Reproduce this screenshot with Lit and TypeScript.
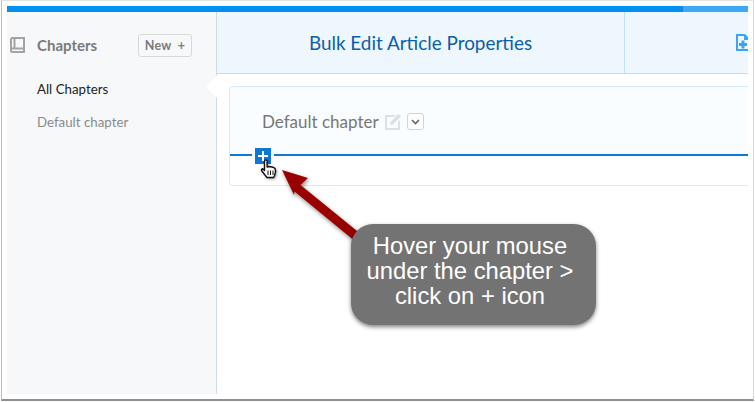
import { LitElement, html, css, svg } from "lit";
import { customElement } from "lit/decorators.js";

@customElement("app-root")
export class AppRoot extends LitElement {
  static styles = css`
    :host {
      display: block;
      width: 755px;
      height: 402px;
      overflow: hidden;
      background: #fff;
      font-family: "Lato", "Open Sans", sans-serif;
    }
    .shot {
      position: relative;
      box-sizing: border-box;
      width: 753px;
      height: 401px;
      margin-left: 1px;
      padding: 5px;
      background: #fff;
      border-left: 1px solid #bdbdbd;
      border-top: 1px solid #e4e4e4;
      border-bottom: 2px solid #8f8f8f;
      border-right: 1px solid #d8d8d8;
    }
    .page {
      width: 741px;
      height: 388px;
      display: flex;
      flex-direction: column;
      overflow: hidden;
    }
    .progress {
      flex: none;
      height: 6px;
      display: flex;
      background: #3fa7f7;
    }
    .progress__done {
      width: 675px;
      background: #0290f5;
      border-right: 1px solid #1a7fd0;
    }
    .body {
      flex: 1;
      display: flex;
      min-height: 0;
    }
    .side {
      position: relative;
      flex: none;
      width: 209px;
      background: #f7f8fa;
      border-right: 1px solid #cfdbe3;
    }
    .side__head {
      height: 23px;
      margin-top: 22px;
      padding: 0 24px 0 3px;
      display: flex;
      align-items: center;
      color: #7a7a7a;
    }
    .side__head svg {
      flex: none;
      width: 15px;
      height: 16px;
      margin: 0 12px 2px 0;
    }
    .side__title {
      flex: 1;
      margin-bottom: 1px;
      font-size: 15px;
      font-weight: 700;
    }
    .new {
      box-sizing: border-box;
      width: 54px;
      height: 23px;
      display: flex;
      align-items: center;
      justify-content: center;
      gap: 6px;
      border: 1px solid #d8d8d8;
      border-radius: 3px;
      font-size: 12.5px;
      font-weight: 700;
      letter-spacing: 0.3px;
    }
    .side__item {
      margin: 0 0 0 30px;
      font-size: 13.3px;
      line-height: 18px;
      color: #8a8a8a;
    }
    .side__item--on {
      margin-top: 23px;
      margin-bottom: 15px;
      color: #222;
    }
    .notch {
      position: absolute;
      right: -1px;
      top: 63px;
      width: 11px;
      height: 23px;
      background: #fff;
      clip-path: polygon(100% 0, 0 50%, 100% 100%);
    }
    .main {
      flex: 1;
      min-width: 0;
      display: flex;
      flex-direction: column;
    }
    .tabs {
      flex: none;
      height: 62px;
      display: flex;
      box-sizing: border-box;
      background: #eff7fe;
      border-bottom: 1px solid #c5dfee;
    }
    .tab {
      flex: none;
      width: 408px;
      box-sizing: border-box;
      display: flex;
      align-items: center;
      justify-content: center;
      border-right: 1px solid #bfe0f5;
      font-size: 18.9px;
      color: #0a5fa8;
    }
    .tab--next {
      width: 124px;
      border-right: 0;
      justify-content: flex-end;
      overflow: hidden;
    }
    .tab--next svg {
      flex: none;
      width: 15px;
      height: 17px;
      margin-right: -1px;
      margin-bottom: 1px;
    }
    .card {
      box-sizing: border-box;
      height: 100px;
      margin: 12px -4px 0 12px;
      border: 1px solid #d5ebf9;
      border-radius: 4px;
      background: #fff;
    }
    .card__head {
      height: 67px;
      box-sizing: border-box;
      padding: 2px 0 0 32px;
      display: flex;
      align-items: center;
      background: #fafdff;
      border-radius: 4px 4px 0 0;
      color: #777;
      font-size: 17px;
    }
    .card__edit {
      width: 16px;
      height: 16px;
      margin-left: 6px;
    }
    .card__drop {
      box-sizing: border-box;
      width: 17px;
      height: 17px;
      margin-left: 6px;
      display: flex;
      align-items: center;
      justify-content: center;
      border: 1px solid #d4d4d4;
      border-radius: 3px;
      background: #fff;
    }
    .rule {
      position: relative;
      height: 2px;
      background: #0a7bd8;
    }
    .add {
      position: absolute;
      left: 25px;
      top: -6px;
      width: 16px;
      height: 16px;
      background: #0a78d6;
      outline: 3px solid #fff;
      display: flex;
      align-items: center;
      justify-content: center;
    }
    .hand {
      position: absolute;
      left: 258px;
      top: 158px;
      width: 18px;
      height: 20px;
      filter: drop-shadow(1px 1px 1px rgba(0, 0, 0, 0.35));
    }
    .arrow {
      position: absolute;
      left: 0;
      top: 0;
      width: 753px;
      height: 400px;
      filter: drop-shadow(1px 2px 2px rgba(0, 0, 0, 0.45));
    }
    .callout {
      position: absolute;
      left: 349px;
      top: 223px;
      box-sizing: border-box;
      width: 245px;
      height: 101px;
      padding: 9px 7px 0 0;
      border-radius: 22px;
      background: #737373;
      box-shadow: 0 2px 4px rgba(0, 0, 0, 0.5);
      color: #fff;
      font-family: "Liberation Sans", Arial, sans-serif;
      font-size: 23.8px;
      line-height: 25px;
      text-align: center;
    }
  `;

  private bookIcon() {
    return html`<svg viewBox="0 0 15 16" fill="none" stroke="#a3a3a3" stroke-width="2">
      ${svg`<path d="M1 13.5V2.5A1.5 1.5 0 0 1 2.5 1H14v14H2.5A1.5 1.5 0 0 1 1 13.5Z M1.5 11.5H14 M4.5 1.5V11"/>`}
    </svg>`;
  }

  render() {
    return html`
      <div class="shot">
        <div class="page">
          <div class="progress"><div class="progress__done"></div></div>
          <div class="body">
            <aside class="side">
              <div class="side__head">
                ${this.bookIcon()}
                <span class="side__title">Chapters</span>
                <span class="new"><span>New</span><span>+</span></span>
              </div>
              <p class="side__item side__item--on">All Chapters</p>
              <p class="side__item">Default chapter</p>
              <div class="notch"></div>
            </aside>
            <section class="main">
              <div class="tabs">
                <div class="tab">Bulk Edit Article Properties</div>
                <div class="tab tab--next">
                  <svg viewBox="0 0 15 17">
                    <path fill="#3aa5f5" d="M1 0h9l5 5v12H1Zm2 2v13h10V6H9V2Z" />
                    <path fill="#3aa5f5" d="M6.500 6.500h3v2.500H12v3H9.500v2.500h-3V12H4V9h2.500Z" />
                  </svg>
                </div>
              </div>
              <div class="card">
                <div class="card__head">
                  <span>Default chapter</span>
                  <svg class="card__edit" viewBox="0 0 16 16">
                    <path fill="#dcdfe3" d="M0 1h11L9 3H2v11h11V8l2-2v10H0Z" />
                    <path fill="#dcdfe3" d="M13.500 0 16 2.500 8 10.500 5 11l.5-3Z" />
                  </svg>
                  <span class="card__drop">
                    <svg width="9" height="6" viewBox="0 0 9 6" fill="none" stroke="#666" stroke-width="1.600">
                      <path d="M1 1l3.500 3.500L8 1" />
                    </svg>
                  </span>
                </div>
                <div class="rule">
                  <div class="add">
                    <svg width="10" height="10" viewBox="0 0 10 10" fill="#fff">
                      <path d="M4 0h2v4h4v2H6v4H4V6H0V4h4Z" />
                    </svg>
                  </div>
                </div>
              </div>
            </section>
          </div>
        </div>
        <svg class="hand" viewBox="0 0 17 20">
          <path
            fill="#fff"
            stroke="#111"
            stroke-width="1.400"
            stroke-linejoin="round"
            d="M4 2.200a1.300 1.300 0 0 1 2.600 0V8l1.600-.5 2 .3 2 .4 2.300 1.200.6 3-1 4.100-1 2H6.500L4.500 16 1 11.500 1 10.300l1.200-.6L4 11.500Z"
          />
          <path stroke="#111" stroke-width="1" d="M7.500 11.500V16M10 11.500V16M12.500 11.500V16" />
        </svg>
        <svg class="arrow" viewBox="0 0 753 400">
          <path
            fill="#990000"
            d="M280 169 306 177 298.500 184 360 234 354 241 292.500 190.500 292 194Z"
          />
        </svg>
        <div class="callout">Hover your mouse<br />under the chapter &gt;<br />click on + icon</div>
      </div>
    `;
  }
}
